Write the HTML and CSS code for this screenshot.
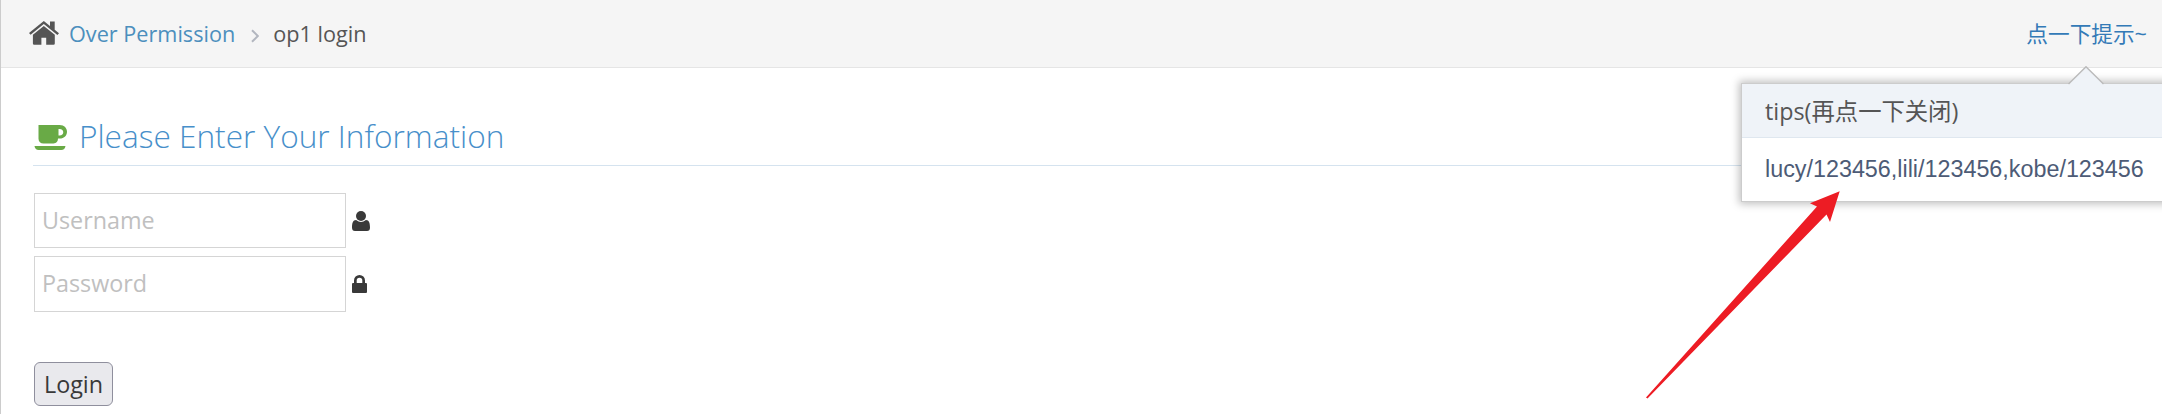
FILE: index.html
```
<!DOCTYPE html>
<html lang="zh-CN">
<head>
<meta charset="utf-8">
<title>Over Permission - op1 login</title>
<link rel="stylesheet" href="styles.css">
</head>
<body>
<div class="page">
  <header class="breadcrumbs">
    <nav class="trail">
      <svg class="icon-home" viewBox="0 0 30 24"><path d="M0 12 14.8 0 21 5V.6h4.7v8.2L30 12.2l-1.6 1.7L14.8 2.9 1.6 13.8z"/><path d="M3.9 13.8 14.8 4.9l11 8.9v8.7q0 1.3-1.3 1.3h-7.3v-7h-4.8v7H5.2q-1.3 0-1.3-1.3z"/></svg>
      <a class="crumb-link" href="#">Over Permission</a>
      <svg class="icon-angle" viewBox="0 0 8 14"><path d="M1 1.2 6.8 7 1 12.8"/></svg>
      <span class="crumb-active">op1 login</span>
    </nav>
    <div class="hint">
      <a class="hint-link" href="#">点一下提示~</a>
      <div class="popover">
        <svg class="popover-arrow" viewBox="0 0 36 19"><path class="arrow-fill" d="M0 19 18 1 36 19z"/><path class="arrow-line" d="M.5 18 18 .8 35.5 18"/></svg>
        <h3 class="popover-title"><span>tips(再点一下关闭)</span></h3>
        <div class="popover-content"><span>lucy/123456,lili/123456,kobe/123456</span></div>
      </div>
    </div>
  </header>
  <main class="content">
    <h4 class="form-title">
      <svg class="icon-coffee" viewBox="0 0 33 26"><path fill-rule="evenodd" d="M4 0h21c10 0 10 13.600 0 13.600h-1.500c0 3-1.500 4.900-4.500 4.900H9c-3 0-5-1.600-5-4.800zM24 4v6.500h1c5 0 5-6.500 0-6.500z"/><path d="M0 21h31q-.6 4-4.200 4H4.200Q.6 25 0 21z"/></svg>
      <span>Please Enter Your Information</span>
    </h4>
    <form class="login-form">
      <label class="field"><input class="field-input" type="text" placeholder="Username"><svg class="icon-user" viewBox="0 0 18 20"><circle cx="9" cy="5" r="5"/><path d="M4.100 9Q9 13 13.900 9C17.200 9 18 12.500 18 16.500Q18 20 15 20H3Q0 20 0 16.500C0 12.500.8 9 4.100 9z"/></svg></label>
      <label class="field field-password"><input class="field-input" type="password" placeholder="Password"><svg class="icon-lock" viewBox="0 0 15 18"><path fill-rule="evenodd" d="M2 8V5.500a5.500 5.500 0 0 1 11 0V8h1q1 0 1 1v8q0 1-1 1H1q-1 0-1-1V9q0-1 1-1zm2.700 0h5.600V5.500a2.800 2.800 0 0 0-5.600 0z"/></svg></label>
      <button class="submit" type="button">Login</button>
    </form>
  </main>
  <svg class="pointer" viewBox="0 0 196 210"><path d="M194.700 1.300 185 32 181.500 24.500 2.500 208.500 1 207.500 172 16.500 165 13.200z"/></svg>
</div>
</body>
</html>
```
FILE: styles.css
```
* { box-sizing: border-box; }
body {
  margin: 0;
  font: 23.33px/34px "Open Sans", "Noto Sans CJK SC", sans-serif;
  color: #393939;
  background: #fff;
}
a { text-decoration: none; }
svg { display: block; flex: none; }
.page {
  position: relative;
  height: 414px;
  overflow: hidden;
  border-left: 1px solid #ccc;
}
.breadcrumbs {
  display: flex;
  justify-content: space-between;
  height: 68px;
  padding: 0 15px 0 28px;
  border-bottom: 1px solid #e5e5e5;
  background: #f5f5f5;
}
.trail { display: flex; align-items: flex-start; padding-top: 17px; font-size: 21.67px; }
.icon-home { width: 30px; height: 24px; margin: 4px 10px 0 0; fill: #555; }
.crumb-link { color: #4c8fbd; }
.icon-angle { width: 8px; height: 14px; margin: 12px 14px 0 16px; fill: none; stroke: #b2b6bf; stroke-width: 2; }
.crumb-active { color: #555; }
.hint { position: relative; padding-top: 17px; }
.hint-link { display: block; font-size: 21.67px; color: #337ab7; white-space: nowrap; }
.popover {
  position: absolute;
  z-index: 2;
  top: 83px;
  right: -32px;
  width: 438px;
  height: 119px;
  border: 1px solid #ccc;
  background: #fff;
  box-shadow: 0 0 8px 2px rgba(0, 0, 0, .25);
}
.popover-arrow { position: absolute; top: -18px; left: 326px; width: 36px; height: 19px; }
.arrow-fill { fill: #eff3f8; }
.arrow-line { fill: none; stroke: #bbb; stroke-width: 1.5; }
.popover-title {
  height: 54px;
  margin: 0;
  padding: 10px 23px 9px;
  font-size: 23.33px;
  font-weight: 400;
  white-space: nowrap;
  color: #555;
  background: #eff3f8;
  border-bottom: 1px solid #dfe7ef;
}
.popover-content {
  padding: 14px 23px;
  font-family: "Liberation Sans", Arial, sans-serif;
  white-space: nowrap;
  color: #4d5b76;
}
.content { padding: 48px 33px 0 32px; }
.form-title {
  display: flex;
  height: 50px;
  margin: 0 0 27px;
  border-bottom: 1px solid #d5e3ef;
  font-size: 31.6px;
  font-weight: 300;
  line-height: 40px;
  color: #478fca;
}
.icon-coffee { width: 34px; height: 26px; margin: 9px 11px 0 1px; fill: #69aa46; }
.login-form { display: flex; flex-direction: column; align-items: flex-start; padding-left: 1px; }
.field { display: flex; align-items: center; margin-bottom: 8px; }
.field-input {
  width: 312px;
  height: 55px;
  padding: 0 7px 2px;
  border: 1px solid #d5d5d5;
  border-radius: 0;
  background: #fff;
  font: inherit;
  outline: none;
}
.field-password .field-input { height: 56px; }
.field-input::placeholder { color: #c0c0c0; opacity: 1; }
.icon-user { width: 18px; height: 20px; margin-left: 6px; fill: #393939; }
.icon-lock { width: 15px; height: 18px; margin-left: 6px; fill: #393939; }
.submit {
  width: 79px;
  height: 44px;
  margin-top: 42px;
  padding: 0;
  border: 1px solid #8f8f9d;
  border-radius: 6px;
  background: #e9e9ed;
  color: #393939;
  font: inherit;
}
.pointer { position: absolute; z-index: 3; left: 1644px; top: 190px; width: 196px; height: 210px; fill: #ed1c24; }
```
